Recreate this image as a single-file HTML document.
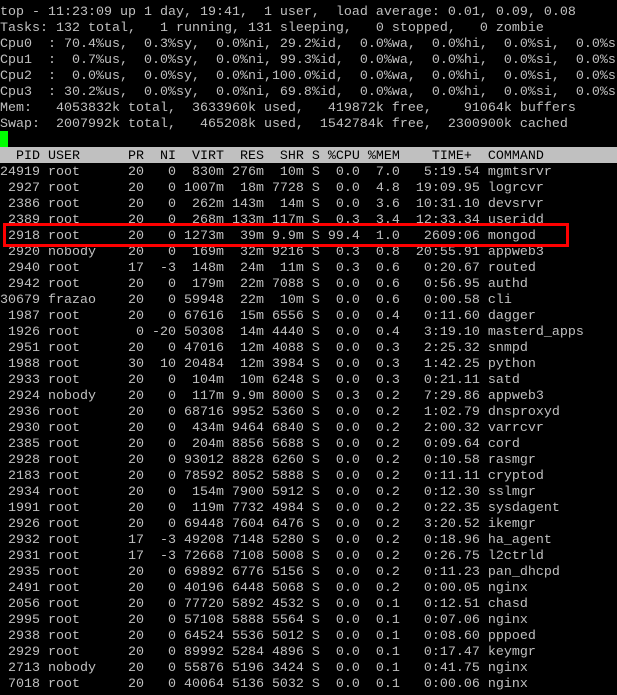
<!DOCTYPE html>
<html><head><meta charset="utf-8"><style>
html,body{margin:0;padding:0;background:#000;width:617px;height:695px;overflow:hidden}
pre{position:relative;margin:0;padding:5px 0 0 0;font-family:"Liberation Mono",monospace;font-size:13.33px;line-height:16px;color:#c0c0c0;white-space:pre}
.bg{position:absolute;left:0;top:147px;width:617px;height:16px;background:#c0c0c0}
.hd{color:#000}
.cur{position:absolute;left:0;top:131px;width:8px;height:16px;background:#00ff00}
.box{position:absolute;left:3px;top:223px;width:560px;height:18px;border:3px solid #ff0000}
</style></head><body>
<div class="bg"></div>
<div class="cur"></div>
<pre>top - 11:23:09 up 1 day, 19:41,  1 user,  load average: 0.01, 0.09, 0.08
Tasks: 132 total,   1 running, 131 sleeping,   0 stopped,   0 zombie
Cpu0  : 70.4%us,  0.3%sy,  0.0%ni, 29.2%id,  0.0%wa,  0.0%hi,  0.0%si,  0.0%st
Cpu1  :  0.7%us,  0.0%sy,  0.0%ni, 99.3%id,  0.0%wa,  0.0%hi,  0.0%si,  0.0%st
Cpu2  :  0.0%us,  0.0%sy,  0.0%ni,100.0%id,  0.0%wa,  0.0%hi,  0.0%si,  0.0%st
Cpu3  : 30.2%us,  0.0%sy,  0.0%ni, 69.8%id,  0.0%wa,  0.0%hi,  0.0%si,  0.0%st
Mem:   4053832k total,  3633960k used,   419872k free,    91064k buffers
Swap:  2007992k total,   465208k used,  1542784k free,  2300900k cached

<span class="hd">  PID USER      PR  NI  VIRT  RES  SHR S %CPU %MEM    TIME+  COMMAND</span>
24919 root      20   0  830m 276m  10m S  0.0  7.0   5:19.54 mgmtsrvr
 2927 root      20   0 1007m  18m 7728 S  0.0  4.8  19:09.95 logrcvr
 2386 root      20   0  262m 143m  14m S  0.0  3.6  10:31.10 devsrvr
 2389 root      20   0  268m 133m 117m S  0.3  3.4  12:33.34 useridd
 2918 root      20   0 1273m  39m 9.9m S 99.4  1.0   2609:06 mongod
 2920 nobody    20   0  169m  32m 9216 S  0.3  0.8  20:55.91 appweb3
 2940 root      17  -3  148m  24m  11m S  0.3  0.6   0:20.67 routed
 2942 root      20   0  179m  22m 7088 S  0.0  0.6   0:56.95 authd
30679 frazao    20   0 59948  22m  10m S  0.0  0.6   0:00.58 cli
 1987 root      20   0 67616  15m 6556 S  0.0  0.4   0:11.60 dagger
 1926 root       0 -20 50308  14m 4440 S  0.0  0.4   3:19.10 masterd_apps
 2951 root      20   0 47016  12m 4088 S  0.0  0.3   2:25.32 snmpd
 1988 root      30  10 20484  12m 3984 S  0.0  0.3   1:42.25 python
 2933 root      20   0  104m  10m 6248 S  0.0  0.3   0:21.11 satd
 2924 nobody    20   0  117m 9.9m 8000 S  0.3  0.2   7:29.86 appweb3
 2936 root      20   0 68716 9952 5360 S  0.0  0.2   1:02.79 dnsproxyd
 2930 root      20   0  434m 9464 6840 S  0.0  0.2   2:00.32 varrcvr
 2385 root      20   0  204m 8856 5688 S  0.0  0.2   0:09.64 cord
 2928 root      20   0 93012 8828 6260 S  0.0  0.2   0:10.58 rasmgr
 2183 root      20   0 78592 8052 5888 S  0.0  0.2   0:11.11 cryptod
 2934 root      20   0  154m 7900 5912 S  0.0  0.2   0:12.30 sslmgr
 1991 root      20   0  119m 7732 4984 S  0.0  0.2   0:22.35 sysdagent
 2926 root      20   0 69448 7604 6476 S  0.0  0.2   3:20.52 ikemgr
 2932 root      17  -3 49208 7148 5280 S  0.0  0.2   0:18.96 ha_agent
 2931 root      17  -3 72668 7108 5008 S  0.0  0.2   0:26.75 l2ctrld
 2935 root      20   0 69892 6776 5156 S  0.0  0.2   0:11.23 pan_dhcpd
 2491 root      20   0 40196 6448 5068 S  0.0  0.2   0:00.05 nginx
 2056 root      20   0 77720 5892 4532 S  0.0  0.1   0:12.51 chasd
 2995 root      20   0 57108 5888 5564 S  0.0  0.1   0:07.06 nginx
 2938 root      20   0 64524 5536 5012 S  0.0  0.1   0:08.60 pppoed
 2929 root      20   0 89992 5284 4896 S  0.0  0.1   0:17.47 keymgr
 2713 nobody    20   0 55876 5196 3424 S  0.0  0.1   0:41.75 nginx
 7018 root      20   0 40064 5136 5032 S  0.0  0.1   0:00.06 nginx</pre>
<div class="box"></div>
</body></html>
